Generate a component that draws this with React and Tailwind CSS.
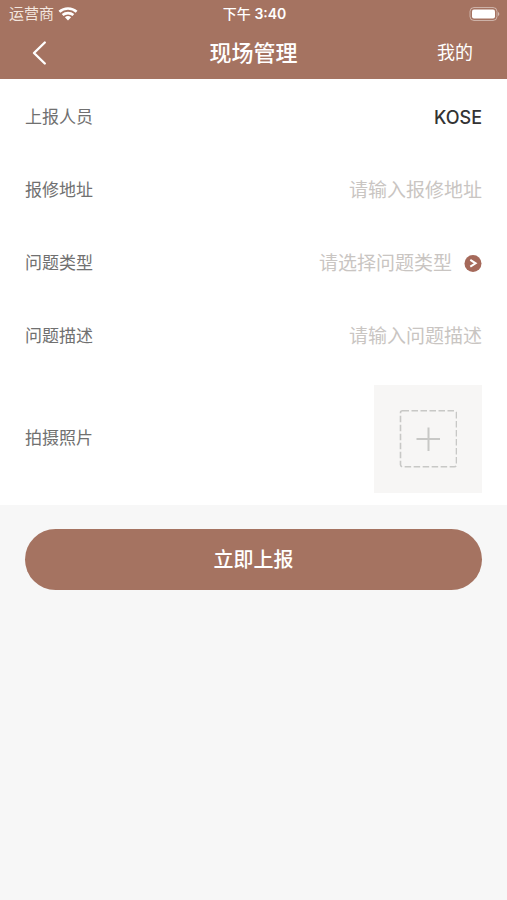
import { useState } from 'react';

const PROBLEM_TYPES = ['设备故障', '水电维修', '卫生清洁', '其他'];

function StatusBar() {
  return (
    <div className="grid grid-cols-3 items-center h-[26px] pt-0.5 pl-[9px] pr-[7px] text-[15px] leading-5">
      <div className="flex items-center gap-1 text-[#f3e6df]">
        <span>运营商</span>
        <svg width="20" height="14" viewBox="0 0 20 14" fill="none" stroke="#fff" strokeWidth="2.6">
          <path d="M1.4 4.8C6.2 0.4 13.8 0.4 18.6 4.8" />
          <path d="M4.6 8.1C7.7 5.4 12.3 5.4 15.4 8.1" />
          <path d="M10 13.4L6.9 10.3C8.6 8.7 11.4 8.7 13.1 10.3Z" fill="#fff" stroke="none" />
        </svg>
      </div>
      <div className="text-center text-[14px] font-medium whitespace-nowrap">
        下午 <span className="font-semibold">3:40</span>
      </div>
      <svg className="justify-self-end" width="31" height="16" viewBox="0 0 31 16">
        <rect x="1" y="1.5" width="27" height="13" rx="4" fill="none" stroke="#fff" strokeOpacity="0.45" />
        <rect x="3" y="3.5" width="23" height="9" rx="2" fill="#fff" />
        <path d="M29 6C30.8 6.8 30.8 9.2 29 10Z" fill="#fff" fillOpacity="0.5" />
      </svg>
    </div>
  );
}

function Row({ label, htmlFor, children }) {
  return (
    <div className="flex items-center justify-between gap-4 h-[73px]">
      <label htmlFor={htmlFor} className="shrink-0 text-[17px] text-[#707070]">{label}</label>
      {children}
    </div>
  );
}

export default function App() {
  const [address, setAddress] = useState('');
  const [type, setType] = useState('');
  const [description, setDescription] = useState('');

  const fieldClass = 'flex-1 min-w-0 bg-transparent text-right text-[19px] leading-7 outline-none text-[#333] placeholder:text-[#c9c5c2]';

  return (
    <div className="min-h-screen bg-[#f7f7f7] font-[Inter,'Noto_Sans_CJK_SC',sans-serif]">
      <header className="bg-[#a57361] text-white">
        <StatusBar />
        <div className="grid grid-cols-3 items-center h-[53px] px-[34px]">
          <button type="button" aria-label="返回" className="justify-self-start">
            <svg width="13" height="26" viewBox="2 0 13 26" fill="none" stroke="#fff" strokeWidth="2.4" strokeLinecap="round" strokeLinejoin="round" overflow="visible">
              <path d="M12.8 2.5L2 13L12.8 23.5" />
            </svg>
          </button>
          <h1 className="text-center text-[22px] leading-8 font-medium whitespace-nowrap">现场管理</h1>
          <button type="button" className="justify-self-end text-lg">我的</button>
        </div>
      </header>

      <form onSubmit={(e) => e.preventDefault()}>
        <div className="bg-white px-[25px] pt-0.5 pb-3">
          <Row label="上报人员" htmlFor="reporter">
            <output id="reporter" className="text-lg font-medium text-[#333]">KOSE</output>
          </Row>
          <Row label="报修地址" htmlFor="address">
            <input id="address" type="text" className={fieldClass} placeholder="请输入报修地址" value={address} onChange={(e) => setAddress(e.target.value)} />
          </Row>
          <Row label="问题类型" htmlFor="type">
            <div className="flex flex-1 min-w-0 items-center gap-3">
              <select
                id="type"
                className={`flex-1 min-w-0 appearance-none bg-transparent text-right text-[19px] leading-7 outline-none ${type ? 'text-[#333]' : 'text-[#c9c5c2]'}`}
                value={type}
                onChange={(e) => setType(e.target.value)}
              >
                <option value="">请选择问题类型</option>
                {PROBLEM_TYPES.map((t) => (
                  <option key={t} value={t}>{t}</option>
                ))}
              </select>
              <svg className="shrink-0" width="18" height="18" viewBox="0 0 18 18">
                <circle cx="9" cy="8.5" r="8.5" fill="#a5695a" />
                <path d="M6.3 4.9L11.6 8.3L6.3 11.7" fill="none" stroke="#fff" strokeWidth="2" />
              </svg>
            </div>
          </Row>
          <Row label="问题描述" htmlFor="description">
            <input id="description" type="text" className={fieldClass} placeholder="请输入问题描述" value={description} onChange={(e) => setDescription(e.target.value)} />
          </Row>
          <div className="flex items-center justify-between pt-3">
            <label htmlFor="photo" className="text-[17px] text-[#707070]">拍摄照片</label>
            <label className="flex items-center justify-center size-[108px] bg-[#f7f6f5] cursor-pointer">
              <input id="photo" type="file" accept="image/*" aria-label="拍摄照片" className="hidden" />
              <svg width="58" height="58" viewBox="0 0 58 58" fill="none" stroke="#c8c8c6">
                <rect x="1.5" y="0.8" width="56" height="56" rx="2" strokeWidth="1.6" strokeDasharray="6.5 2.5" />
                <path d="M29.5 17.5V41M17.5 29H41" strokeWidth="2" />
              </svg>
            </label>
          </div>
        </div>
        <div className="px-[25px] pt-6">
          <button type="submit" className="w-full h-[61px] rounded-full bg-[#a57361] text-xl font-medium text-white">立即上报</button>
        </div>
      </form>
    </div>
  );
}
